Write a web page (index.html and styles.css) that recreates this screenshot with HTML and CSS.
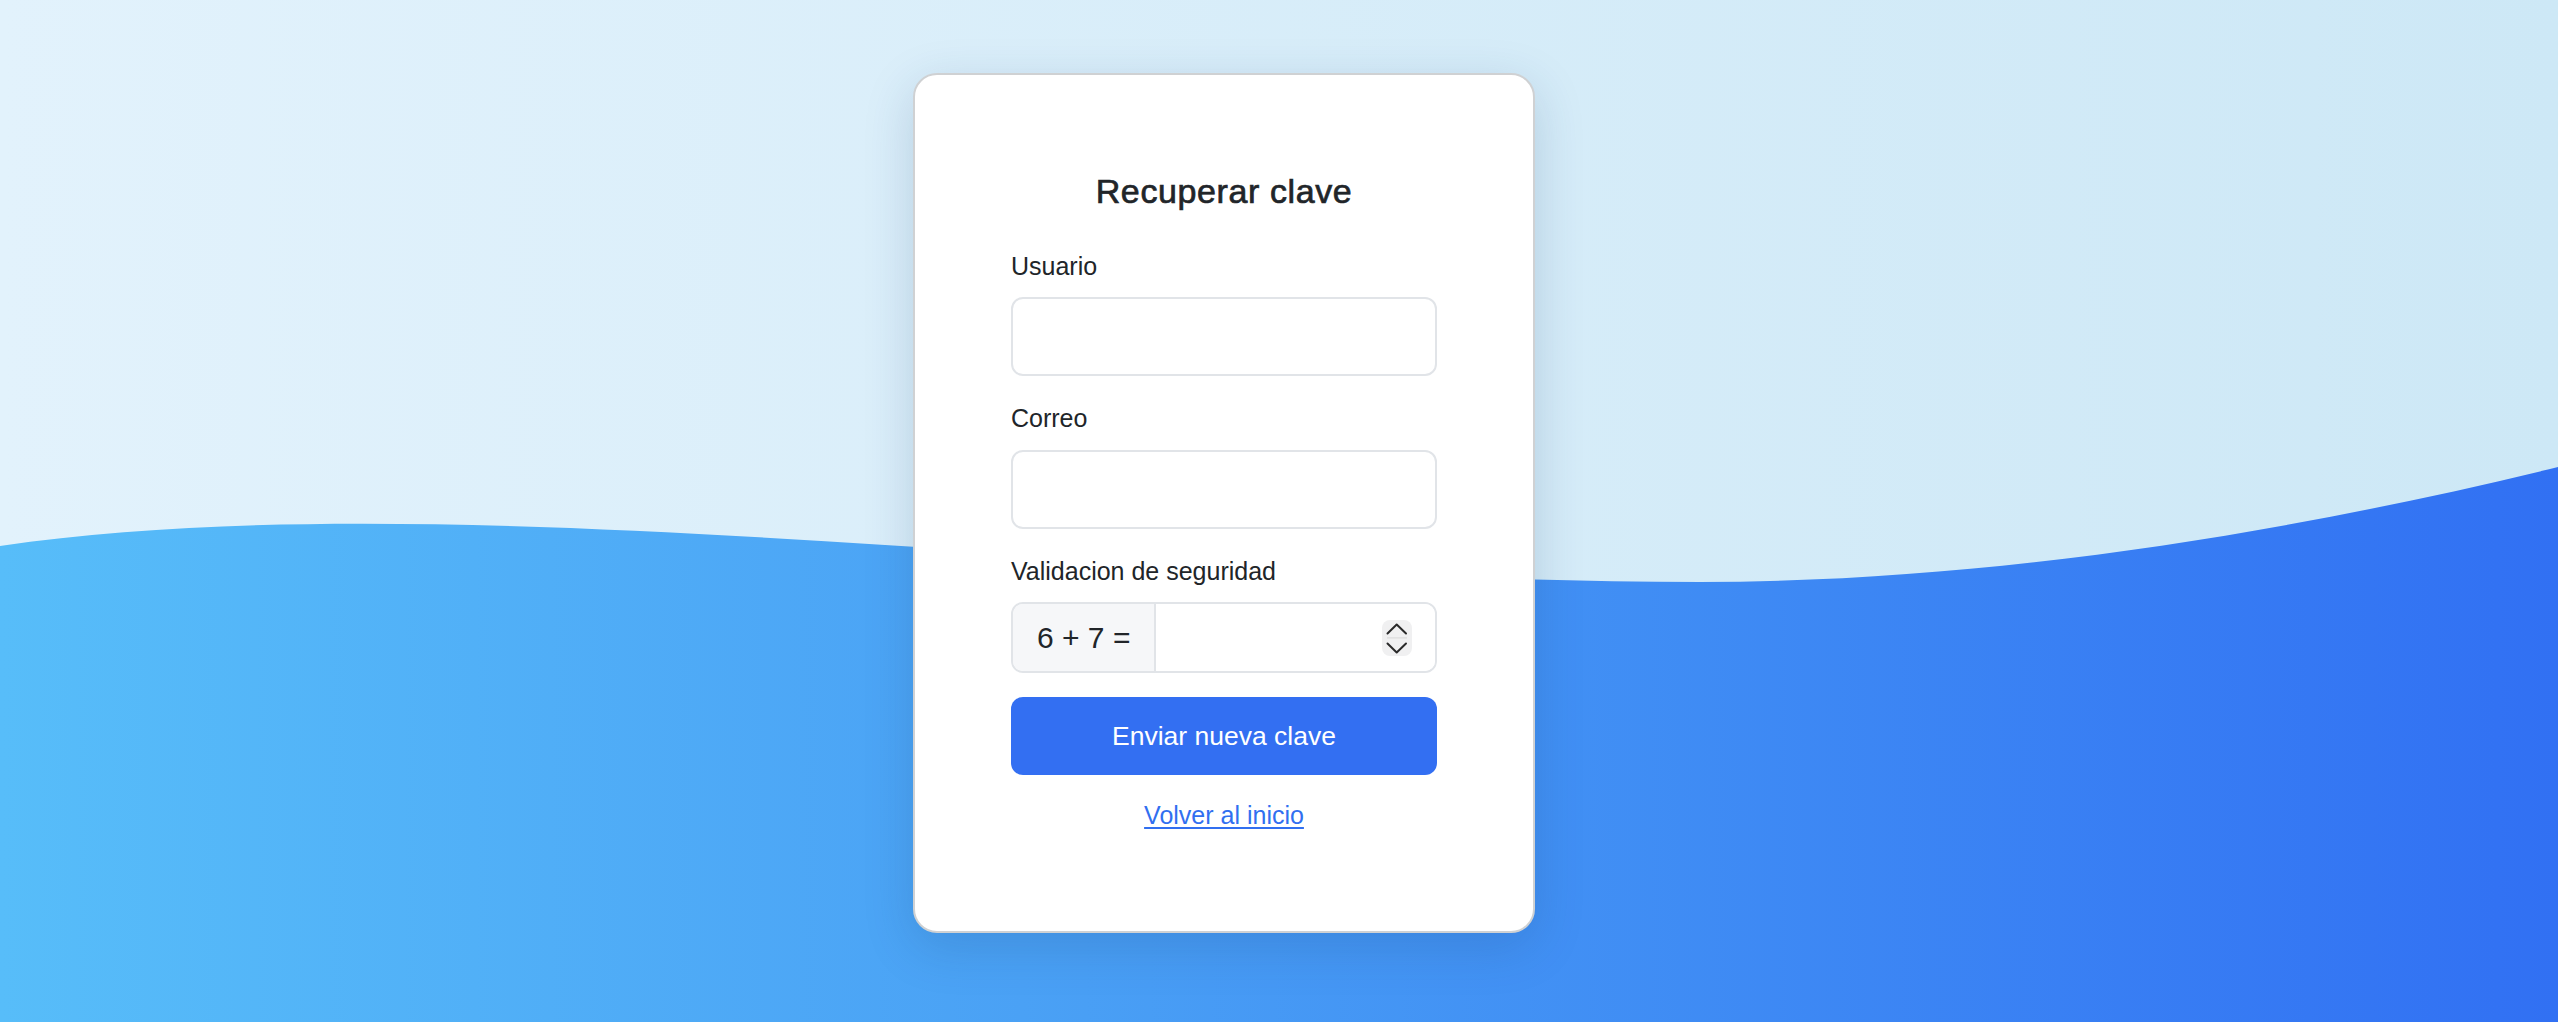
FILE: index.html
```html
<!DOCTYPE html>
<html lang="es">
<head>
<meta charset="utf-8">
<title>Recuperar clave</title>
<link rel="stylesheet" href="styles.css">
</head>
<body>
<div class="page">
  <svg class="wave" viewBox="0 0 2558 1022" preserveAspectRatio="none" aria-hidden="true">
    <defs>
      <linearGradient id="wg" x1="0" y1="0" x2="1" y2="0">
        <stop offset="0" stop-color="#57bdf9"/>
        <stop offset="0.4" stop-color="#4aa1f5"/>
        <stop offset="1" stop-color="#3170f3"/>
      </linearGradient>
    </defs>
    <path d="M0,546 C450,480 1100,582 1700,582 C2000,582 2300,530 2558,467 L2558,1022 L0,1022 Z" fill="url(#wg)"/>
  </svg>
  <main class="stage">
    <form class="card" onsubmit="return false">
      <h1 class="title">Recuperar clave</h1>
      <div class="field">
        <label class="label" for="usuario">Usuario</label>
        <input class="control" id="usuario" type="text">
      </div>
      <div class="field">
        <label class="label" for="correo">Correo</label>
        <input class="control" id="correo" type="text">
      </div>
      <div class="field">
        <label class="label" for="captcha">Validacion de seguridad</label>
        <div class="captcha">
          <span class="addon">6 + 7 =</span>
          <div class="answer">
            <input class="answer-input" id="captcha" type="text">
            <span class="spinner">
              <svg width="30" height="36" viewBox="0 0 30 36" aria-hidden="true">
                <path d="M5.5 13.5 L14.7 4.5 L24 13.5" fill="none" stroke="#2a2a2a" stroke-width="2" stroke-linecap="round" stroke-linejoin="round"/>
                <line x1="5" y1="17.8" x2="25" y2="17.8" stroke="#dcdcdc" stroke-width="1.2"/>
                <path d="M5.5 23.5 L14.7 32.5 L24 23.5" fill="none" stroke="#2a2a2a" stroke-width="2" stroke-linecap="round" stroke-linejoin="round"/>
              </svg>
            </span>
          </div>
        </div>
      </div>
      <button class="submit" type="submit">Enviar nueva clave</button>
      <p class="back-row"><a class="back" href="#">Volver al inicio</a></p>
    </form>
  </main>
</div>
</body>
</html>
```

FILE: styles.css
```css
html, body {
  margin: 0;
  height: 100%;
}

body {
  font-family: "Liberation Sans", Arial, sans-serif;
  color: #212529;
  background: linear-gradient(to right, #e2f2fc, #cde8f6);
  overflow: hidden;
}

.page {
  position: relative;
  height: 1022px;
}

.wave {
  position: absolute;
  left: 0;
  top: 0;
  width: 100%;
  height: 100%;
  z-index: 0;
}

.stage {
  position: relative;
  z-index: 1;
  display: flex;
  justify-content: center;
  padding: 73px 110px 0 0;
}

.card {
  width: 622px;
  box-sizing: border-box;
  padding: 96px;
  background: #fff;
  border: 2px solid #cfd1d3;
  border-radius: 24px;
  box-shadow: 0 14px 50px rgba(20, 60, 110, 0.18);
}

.title {
  margin: 0 0 36px;
  font-size: 34px;
  line-height: 40.8px;
  font-weight: 400;
  letter-spacing: 0.6px;
  -webkit-text-stroke: 0.7px #212529;
  text-align: center;
  color: #212529;
}

.field {
  margin-bottom: 24px;
}

.label {
  display: block;
  margin-bottom: 12px;
  font-size: 25px;
  line-height: 37.5px;
}

.control {
  display: block;
  width: 100%;
  height: 79px;
  box-sizing: border-box;
  padding: 0 24px;
  border: 2px solid #e1e4e8;
  border-radius: 12px;
  font: inherit;
  font-size: 25px;
  background: #fff;
  outline: none;
}

.captcha {
  display: flex;
  height: 71px;
  box-sizing: border-box;
  border: 2px solid #e1e4e8;
  border-radius: 12px;
  overflow: hidden;
}

.addon {
  flex: 0 0 auto;
  display: flex;
  align-items: center;
  padding: 0 24px;
  background: #f6f7f9;
  border-right: 2px solid #e1e4e8;
  font-size: 30px;
  white-space: nowrap;
  color: #212529;
}

.answer {
  flex: 1 1 0;
  min-width: 0;
  display: flex;
  align-items: center;
  padding-right: 23px;
  background: #fff;
}

.answer-input {
  flex: 1 1 0;
  width: 0;
  min-width: 0;
  height: 100%;
  box-sizing: border-box;
  border: 0;
  padding: 0 24px;
  font: inherit;
  font-size: 25px;
  background: transparent;
  outline: none;
}

.spinner {
  flex: 0 0 30px;
  display: flex;
  width: 30px;
  height: 36px;
  border-radius: 8px;
  background: #f0f0f1;
}

.submit {
  display: block;
  width: 100%;
  height: 78px;
  border: 0;
  border-radius: 12px;
  background: #336ff2;
  color: #fff;
  font-family: inherit;
  font-size: 26.5px;
  cursor: pointer;
}

.back-row {
  margin: 22px 0 0;
  text-align: center;
  font-size: 25px;
  line-height: 37.5px;
}

.back {
  color: #316ff0;
  text-decoration: underline;
  text-decoration-thickness: 2px;
  text-underline-offset: 3px;
}
```
